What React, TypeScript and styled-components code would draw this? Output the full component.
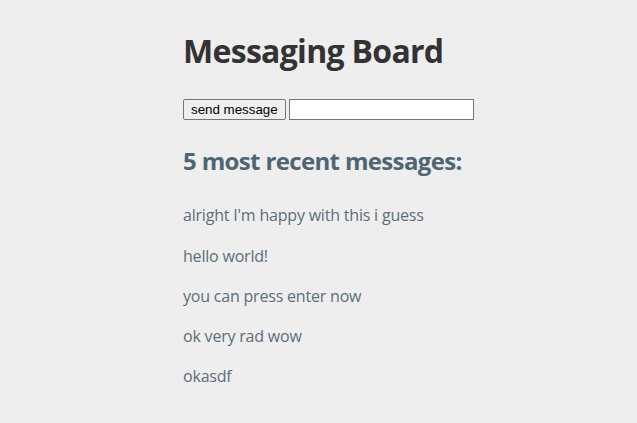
import React, { useState } from "react";
import styled, { createGlobalStyle } from "styled-components";

const Global = createGlobalStyle`
  html, body { margin: 0; padding: 0; background: #eeeeee; }
  body { font-family: "Open Sans", "Noto Sans", sans-serif; }
`;

const Page = styled.main`
  width: 271px;
  margin: 0 auto;
  padding-top: 8px;
`;

const Title = styled.h1`
  font-size: 32px;
  font-weight: 700;
  color: #333333;
  margin: 25px 0 29px;
  line-height: 1.15;
  letter-spacing: -0.7px;
  white-space: nowrap;
`;

const Form = styled.form`
  display: flex;
  align-items: center;
  gap: 3px;
  white-space: nowrap;
`;

const SendButton = styled.button`
  font-family: "Liberation Sans", Arial, sans-serif;
  font-size: 13.33px;
  height: 21px;
  padding: 1px 7px;
  border: 1px solid #767676;
  border-radius: 2px;
  background: #efefef;
  color: #000;
`;

const MessageInput = styled.input`
  font-family: "Liberation Sans", Arial, sans-serif;
  font-size: 13.33px;
  width: 185px;
  height: 21px;
  box-sizing: border-box;
  padding: 1px 2px;
  border: 1px solid #767676;
  border-radius: 0;
  background: #fff;
  flex: none;
`;

const Subtitle = styled.h2`
  font-size: 24px;
  font-weight: 700;
  color: #4f6672;
  margin: 27px 0 29px;
  line-height: 1.15;
  letter-spacing: -0.65px;
  white-space: nowrap;
`;

const Message = styled.p`
  font-size: 16px;
  color: #5a6f7b;
  margin: 16px 0;
  line-height: 24.25px;
  letter-spacing: -0.2px;
  white-space: nowrap;
`;

const messages = [
  "alright I'm happy with this i guess",
  "hello world!",
  "you can press enter now",
  "ok very rad wow",
  "okasdf",
];

export default function App() {
  const [text, setText] = useState("");
  return (
    <>
      <Global />
      <Page>
        <Title>Messaging Board</Title>
        <Form onSubmit={(e) => e.preventDefault()}>
          <SendButton type="submit">send message</SendButton>
          <MessageInput value={text} onChange={(e) => setText(e.target.value)} />
        </Form>
        <Subtitle>5 most recent messages:</Subtitle>
        {messages.map((m) => (
          <Message key={m}>{m}</Message>
        ))}
      </Page>
    </>
  );
}
